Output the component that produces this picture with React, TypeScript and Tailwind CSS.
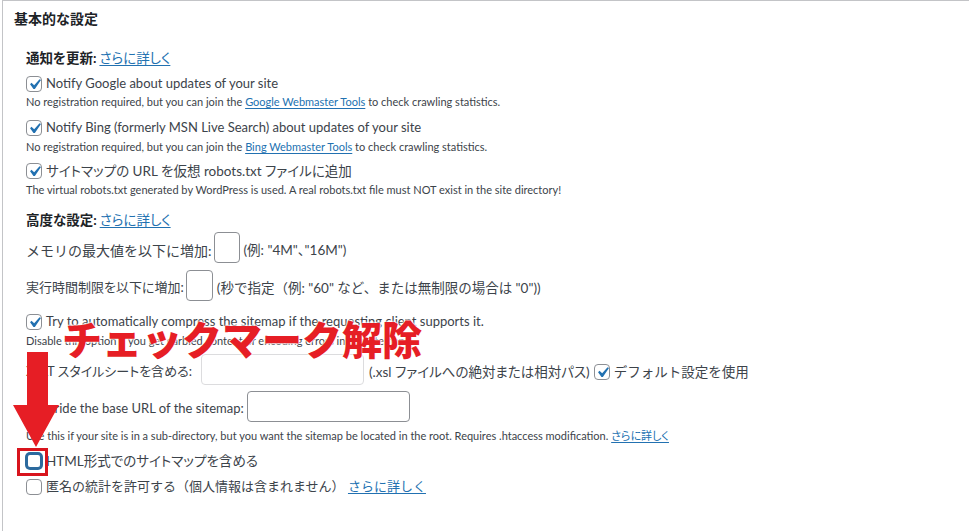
import React from "react";

const font = { fontFamily: 'Lato, "Noto Sans CJK JP", sans-serif' };

function Check({ checked, focus }: { checked?: boolean; focus?: boolean }) {
  return (
    <span
      className={
        "relative inline-block w-[16px] h-[16px] shrink-0 rounded-[4px] bg-white " +
        (focus
          ? "border-2 border-[#2c6a9e] shadow-[0_0_0_1px_#2c6a9e]"
          : "border border-[#8c8f94]")
      }
    >
      {checked && (
        <svg
          viewBox="0 0 20 20"
          className="absolute left-[-3px] top-[-3px] w-[21px] h-[21px]"
        >
          <path
            d="M14.83 4.89l1.34.94-5.81 8.38H9.02L5.78 9.67l1.34-1.25 2.57 2.4z"
            fill="#2271b1"
          />
        </svg>
      )}
    </span>
  );
}

function Link({ children }: { children: React.ReactNode }) {
  return <span className="text-[#2271b1] underline underline-offset-2">{children}</span>;
}

function Input({ w, light }: { w: string; light?: boolean }) {
  return (
    <span
      className={
        "inline-block h-[31px] rounded-[4px] bg-white border " +
        w +
        " " +
        (light ? "border-[#dcdcde]" : "border-[#8c8f94]")
      }
    />
  );
}

export default function App() {
  return (
    <div
      className="relative w-[969px] h-[531px] overflow-hidden bg-white text-[#3c434a] [font-feature-settings:'palt']"
      style={font}
    >
      <div className="ml-[2px] h-[531px] border-t border-l border-[#c3c4c7] flex flex-col">
        <div className="mt-[5px] h-[24px] flex items-center pl-[11px] text-[14px] font-bold text-[#1d2327] [font-feature-settings:normal]">
          基本的な設定
        </div>
        <div className="pl-[23px] flex flex-col text-[13.5px]">
          <div className="mt-[16px] h-[24px] flex items-center">
            <span className="font-bold text-[#1d2327]">通知を更新:</span>
            <span className="ml-[3px]">
              <Link>さらに詳しく</Link>
            </span>
          </div>
          <div className="mt-[4px] h-[20px] flex items-center gap-[4px] text-[13px]">
            <Check checked />
            <span>Notify Google about updates of your site</span>
          </div>
          <div className="h-[16px] flex items-center text-[11px]">
            <span>
              No registration required, but you can join the <Link>Google Webmaster Tools</Link> to
              check crawling statistics.
            </span>
          </div>
          <div className="mt-[8px] h-[20px] flex items-center gap-[4px] text-[13px]">
            <Check checked />
            <span>Notify Bing (formerly MSN Live Search) about updates of your site</span>
          </div>
          <div className="mt-[1px] h-[16px] flex items-center text-[11px]">
            <span>
              No registration required, but you can join the <Link>Bing Webmaster Tools</Link> to
              check crawling statistics.
            </span>
          </div>
          <div className="mt-[6px] h-[20px] flex items-center gap-[4px]">
            <Check checked />
            <span>サイトマップの URL を仮想 robots.txt ファイルに追加</span>
          </div>
          <div className="mt-[1px] h-[16px] flex items-center text-[11px]">
            <span>
              The virtual robots.txt generated by WordPress is used. A real robots.txt file must NOT
              exist in the site directory!
            </span>
          </div>
          <div className="mt-[10px] h-[24px] flex items-center">
            <span className="font-bold text-[#1d2327]">高度な設定:</span>
            <span className="ml-[3px]">
              <Link>さらに詳しく</Link>
            </span>
          </div>
          <div className="mt-[2px] h-[32px] flex items-center">
            <span className="text-[14px] [font-feature-settings:normal]">メモリの最大値を以下に増加:</span>
            <span className="ml-[2px]">
              <Input w="w-[26px]" />
            </span>
            <span className="ml-[4px]">(例: "4M"、"16M")</span>
          </div>
          <div className="mt-[6px] h-[32px] flex items-center">
            <span className="text-[13px]">実行時間制限を以下に増加:</span>
            <span className="ml-[2px]">
              <Input w="w-[27px]" />
            </span>
            <span className="ml-[4px] [font-feature-settings:normal]">
              (秒で指定（例: "60" など、または無制限の場合は "0"))
            </span>
          </div>
          <div className="mt-[8px] h-[20px] flex items-center gap-[4px] text-[13px]">
            <Check checked />
            <span>Try to automatically compress the sitemap if the requesting client supports it.</span>
          </div>
          <div className="mt-[1px] h-[16px] flex items-center text-[11px]">
            <span>Disable this option if you get garbled content or encoding errors in the sitemap.</span>
          </div>
          <div className="mt-[7px] h-[32px] flex items-center">
            <span className="text-[13px]">XSLT スタイルシートを含める:</span>
            <span className="ml-[9px]">
              <Input w="w-[163px]" light />
            </span>
            <span className="ml-[5px]">(.xsl ファイルへの絶対または相対パス)</span>
            <span className="ml-[4px] flex items-center gap-[4px]">
              <Check checked />
              <span className="[font-feature-settings:normal]">デフォルト設定を使用</span>
            </span>
          </div>
          <div className="mt-[5px] h-[32px] flex items-center text-[13px]">
            <span>Override the base URL of the sitemap:</span>
            <span className="ml-[3px]">
              <Input w="w-[163px]" />
            </span>
          </div>
          <div className="mt-[3px] h-[16px] flex items-center text-[11px]">
            <span>
              Use this if your site is in a sub-directory, but you want the sitemap be located in the
              root. Requires .htaccess modification. <Link>さらに詳しく</Link>
            </span>
          </div>
          <div className="mt-[7px] h-[20px] flex items-center gap-[4px]">
            <Check focus />
            <span>HTML形式でのサイトマップを含める</span>
          </div>
          <div className="mt-[6px] h-[20px] flex items-center gap-[4px] text-[13px] [font-feature-settings:normal]">
            <Check />
            <span>
              匿名の統計を許可する（個人情報は含まれません） <Link>さらに詳しく</Link>
            </span>
          </div>
        </div>
      </div>

      {/* annotation */}
      <div
        className="absolute left-[62px] top-[318px] text-[40px] leading-none font-black text-[#e61e25] whitespace-nowrap [font-feature-settings:normal] [text-shadow:0_0_2px_#fff,0_0_2px_#fff,0_0_2px_#fff]"
        style={{ fontFamily: '"Noto Sans CJK JP", sans-serif' }}
      >
        チェックマーク解除
      </div>
      <svg className="absolute left-[12px] top-[352px]" width="48" height="96" viewBox="0 0 48 96">
        <polygon points="15,0 36,0 36,53 47,53 24,95 1,53 15,53" fill="#e61e25" />
      </svg>
      <div className="absolute left-[17px] top-[448px] w-[31px] h-[28px] border-[3px] border-[#d8141d]" />
    </div>
  );
}
